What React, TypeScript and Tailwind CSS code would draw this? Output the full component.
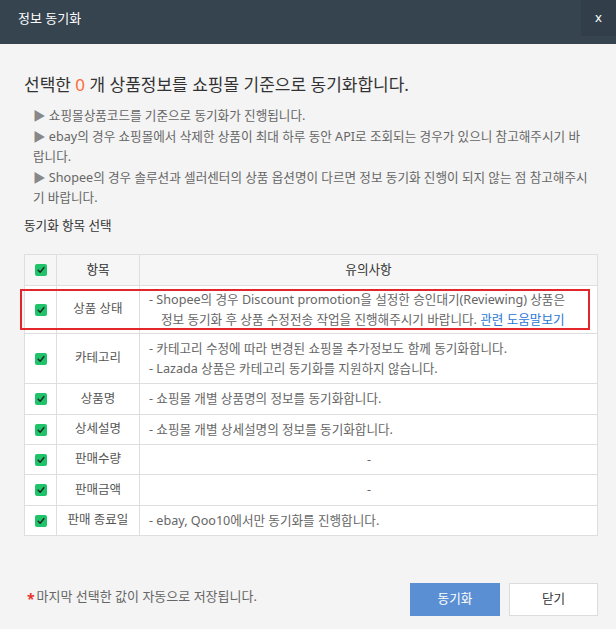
import { ReactNode } from "react";

const font = { fontFamily: '"Noto Sans", "Noto Sans CJK KR", sans-serif' };

function Check() {
  return (
    <span className="flex h-[12px] w-[12px] items-center justify-center rounded-[2px] bg-[#1fc36a]">
      <svg viewBox="0 0 12 12" className="h-[10px] w-[10px]">
        <path d="M2.6 6.2 L5 8.6 L9.4 3.2" fill="none" stroke="#1d2a22" strokeWidth="1.8" strokeLinecap="round" strokeLinejoin="round" />
      </svg>
    </span>
  );
}

interface RowProps {
  name: string;
  h: string;
  children: ReactNode;
  center?: boolean;
  marked?: boolean;
}

function Row({ name, h, children, center, marked }: RowProps) {
  return (
    <div className={`relative grid grid-cols-[32px_83px_1fr] border-b border-[#dedede] bg-white ${h}`}>
      <div className="flex items-center justify-center border-r border-[#dedede]">
        <Check />
      </div>
      <div className="flex items-center justify-center border-r border-[#dedede] text-[12.5px] text-[#555]">
        {name}
      </div>
      <div
        className={`flex flex-col justify-center pl-[9px] pr-2 text-[12.6px] leading-[20px] text-[#666] ${
          center ? "items-center" : ""
        }`}
      >
        {children}
      </div>
      {marked ? (
        <div className="pointer-events-none absolute bottom-[3px] left-[-5px] right-[7px] top-[3px] border-2 border-[#e3262b]" />
      ) : null}
    </div>
  );
}

export default function App() {
  return (
    <div style={font} className="flex h-[629px] w-[616px] flex-col bg-[#f4f4f4]">
      <header className="flex h-[44px] shrink-0 justify-between bg-[#36444f]">
        <h1 className="pl-[18px] pt-[9px] text-[13px] leading-[18px] text-white">정보 동기화</h1>
        <button
          type="button"
          aria-label="닫기"
          className="flex h-[36px] w-[35px] items-center justify-center bg-[#323f4a] pb-[1px] text-[13px] text-white"
        >
          x
        </button>
      </header>

      <div className="flex flex-1 flex-col pl-6 pr-[18px]">
        <h2 className="mt-[29px] text-[17px] leading-[24px] text-[#333]">
          선택한 <span className="text-[#ff6a3c]">0</span> 개 상품정보를 쇼핑몰 기준으로 동기화합니다.
        </h2>

        <div className="mt-[9px] flex flex-col gap-px pl-[9px] pr-[4px] text-[12.6px] leading-[20px] text-[#666]">
          <p>
            <span className="text-[#888]">▶</span> 쇼핑몰상품코드를 기준으로 동기화가 진행됩니다.
          </p>
          <p className="pr-[7px]">
            <span className="text-[#888]">▶</span> ebay의 경우 쇼핑몰에서 삭제한 상품이 최대 하루 동안 API로 조회되는 경우가 있으니 참고해주시기 바랍니다.
          </p>
          <p>
            <span className="text-[#888]">▶</span> Shopee의 경우 솔루션과 셀러센터의 상품 옵션명이 다르면 정보 동기화 진행이 되지 않는 점 참고해주시기 바랍니다.
          </p>
        </div>

        <p className="mt-[8px] text-[12.6px] leading-[20px] text-[#333]">동기화 항목 선택</p>

        <div className="mt-[18px] border-l border-r border-t border-[#dedede]">
          <div className="grid h-[31px] grid-cols-[32px_83px_1fr] border-b border-[#dedede] bg-[#f6f6f6] text-[12.6px] text-[#333]">
            <div className="flex items-center justify-center border-r border-[#dedede]">
              <Check />
            </div>
            <div className="flex items-center justify-center border-r border-[#dedede]">항목</div>
            <div className="flex items-center justify-center">유의사항</div>
          </div>

          <Row name="상품 상태" h="h-[48px]" marked>
            <p>- Shopee의 경우 Discount promotion을 설정한 승인대기(Reviewing) 상품은</p>
            <p className="pl-[12px]">
              정보 동기화 후 상품 수정전송 작업을 진행해주시기 바랍니다.{" "}
              <a href="#" className="text-[#2b78d4]">
                관련 도움말보기
              </a>
            </p>
          </Row>
          <Row name="카테고리" h="h-[50px]">
            <p>- 카테고리 수정에 따라 변경된 쇼핑몰 추가정보도 함께 동기화합니다.</p>
            <p>- Lazada 상품은 카테고리 동기화를 지원하지 않습니다.</p>
          </Row>
          <Row name="상품명" h="h-[31px]">
            <p>- 쇼핑몰 개별 상품명의 정보를 동기화합니다.</p>
          </Row>
          <Row name="상세설명" h="h-[30px]">
            <p>- 쇼핑몰 개별 상세설명의 정보를 동기화합니다.</p>
          </Row>
          <Row name="판매수량" h="h-[30px]" center>
            <p>-</p>
          </Row>
          <Row name="판매금액" h="h-[31px]" center>
            <p>-</p>
          </Row>
          <Row name="판매 종료일" h="h-[30px]">
            <p>- ebay, Qoo10에서만 동기화를 진행합니다.</p>
          </Row>
        </div>

        <div className="mt-auto mb-[13px] flex items-center justify-between">
          <p className="mb-[8px] flex items-center pl-[3px] text-[13px] leading-[18px] text-[#666]">
            <span className="mr-[2px] translate-y-[3px] text-[14px] font-bold leading-[18px] text-[#e8352b]">*</span>
            마지막 선택한 값이 자동으로 저장됩니다.
          </p>
          <div className="flex gap-[9px]">
            <button type="button" className="h-[33px] w-[90px] bg-[#5b8fd3] text-[12.6px] text-white">
              동기화
            </button>
            <button type="button" className="h-[33px] w-[89px] border border-[#dcdcdc] bg-white text-[12.6px] text-[#333]">
              닫기
            </button>
          </div>
        </div>
      </div>
    </div>
  );
}
